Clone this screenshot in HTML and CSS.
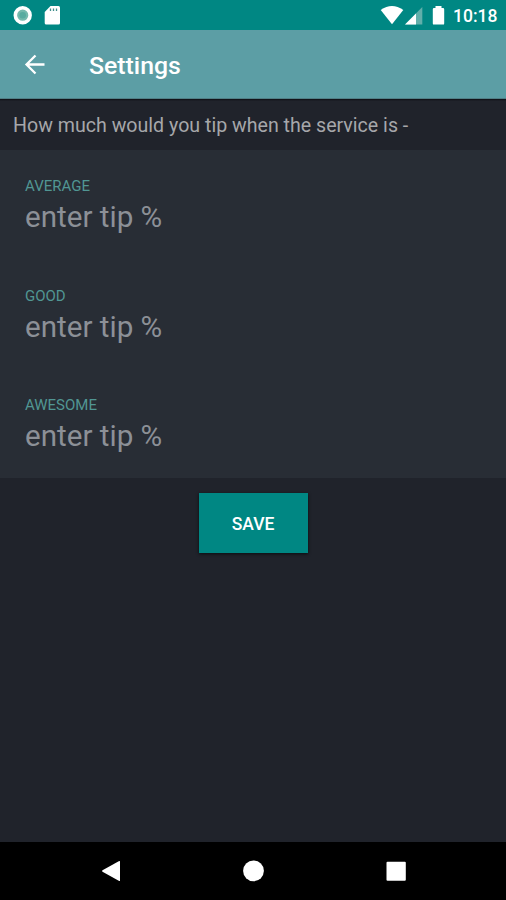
FILE: index.html
```
<!DOCTYPE html>
<html lang="en">
<head>
<meta charset="utf-8">
<title>Settings</title>
<link rel="stylesheet" href="styles.css">
</head>
<body>
<div class="screen">
  <div class="status">
    <svg class="status-left" width="70" height="30" viewBox="0 0 70 30">
      <circle cx="22.7" cy="15.2" r="7.4" fill="#75b9ad" stroke="#fff" stroke-width="3.6"/>
      <circle cx="22.7" cy="15.2" r="3.3" fill="#58aba0"/>
      <path d="M50.500 6H58.500Q60 6 60 7.500V23Q60 24.600 58.400 24.600H46.300Q44.700 24.600 44.700 23V12Z" fill="#fff"/>
      <path d="M50.500 8.500v2.500M53.500 8.500v2.500M56.500 8.500v2.500" stroke="#408f8c" stroke-width="1.300"/>
    </svg>
    <svg class="status-right" width="70" height="30" viewBox="380 0 70 30">
      <path d="M380.700 10Q392 1.800 403.300 10L392 24.300Z" fill="#fff"/>
      <path d="M422.300 7V24.500H405Z" fill="#61afaa"/>
      <path d="M416 13.400V24.500H405Z" fill="#fff"/>
      <path d="M435.500 6h6v2h1.500q1.200 0 1.200 1.200v14.200q0 1.200-1.200 1.200h-9q-1.200 0-1.200-1.200V9.200q0-1.200 1.200-1.200h1.500z" fill="#fff"/>
    </svg>
    <span class="clock">10:18</span>
  </div>
  <header class="appbar">
    <svg class="back" width="24" height="24" viewBox="0 0 24 24"><path d="M21.500 11.500H4M12.500 2.500L3.500 11.500L12.500 20.500" fill="none" stroke="#fff" stroke-width="2.300"/></svg>
    <h1 class="title">Settings</h1>
  </header>
  <p class="question"><span>How much would you tip when the service is -</span></p>
  <main class="fields">
    <div class="field"><span class="label">AVERAGE</span><span class="value">enter tip %</span></div>
    <div class="field"><span class="label">GOOD</span><span class="value">enter tip %</span></div>
    <div class="field"><span class="label">AWESOME</span><span class="value">enter tip %</span></div>
  </main>
  <div class="actions"><button class="save">SAVE</button></div>
  <nav class="nav">
    <svg width="506" height="58" viewBox="0 0 506 58" fill="#fff">
      <path d="M102.500 28.200L119.200 19Q120 18.600 120 19.500V38.500Q120 39.400 119.200 39L102.500 29.800Q101.500 29 102.500 28.200Z"/>
      <circle cx="253.500" cy="28.800" r="10.400"/>
      <rect x="386.500" y="19.700" width="19.300" height="19" rx="1"/>
    </svg>
  </nav>
</div>
</body>
</html>
```
FILE: styles.css
```
* { box-sizing: border-box; }
body { margin: 0; font-family: Roboto, sans-serif; background: #20232b; }
.screen { width: 506px; height: 900px; display: flex; flex-direction: column; }
.status { height: 30px; background: #008783; display: flex; }
.status-right { margin-left: 310px; }
.clock { margin-left: 3px; color: #fff; font-size: 17.5px; font-weight: 500; line-height: 32px; white-space: nowrap; }
.appbar { height: 69px; background: #5c9ea5; border-bottom: 1px solid #507f86; display: flex; align-items: center; padding: 2px 0 0 23px; }
.title { margin: 2px 0 0 42px; color: #fff; font-size: 24.8px; font-weight: 500; line-height: 30px; }
.question { margin: 0; height: 51px; padding: 0 13px; color: #a6a7aa; font-size: 19.6px; line-height: 53px; background: linear-gradient(#0c0e13, #20232b 2px); white-space: nowrap; }
.fields { height: 328px; background: #282d35; padding-top: 26px; }
.field { height: 109.6px; padding-left: 25px; display: flex; flex-direction: column; }
.label { color: #519693; font-size: 15px; line-height: 21px; }
.value { color: #8c9097; font-size: 29.6px; line-height: 40px; }
.actions { flex: 1; display: flex; justify-content: center; align-items: flex-start; padding-top: 15px; }
.save { width: 109px; height: 60px; border: 0; padding: 2px 0 0; background: #008783; color: #fff; font: 500 17.5px Roboto, sans-serif; box-shadow: 0 1px 3px #0b0d11; }
.nav { height: 58px; background: #000; }
.nav svg { display: block; }
```
